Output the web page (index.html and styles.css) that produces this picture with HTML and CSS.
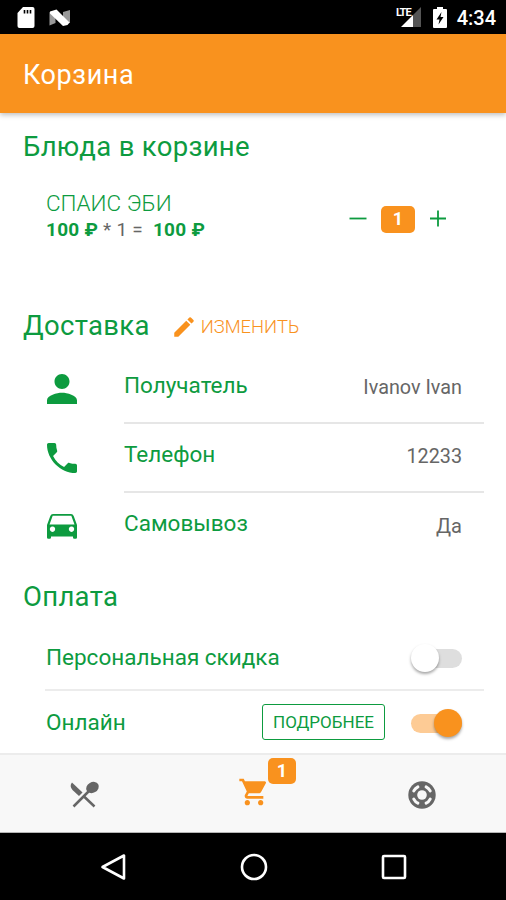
FILE: index.html
```html
<!DOCTYPE html>
<html lang="ru">
<head>
  <meta charset="UTF-8" />
  <title>Корзина</title>
  <link rel="stylesheet" href="styles.css">
</head>
<body>
  <div class="screen">
    <!-- Системная строка -->
    <div class="status-bar">
      <svg class="status-sd" width="18" height="22" viewBox="0 0 18 22">
        <path fill="#fff" d="M6 0h9.500a2 2 0 0 1 2 2v17a2 2 0 0 1-2 2h-13a2 2 0 0 1-2-2V6z" />
        <path stroke="#000" stroke-width="1.600" d="M7.500 3v3.500M10.500 3v3.500M13.500 3v3.500" />
      </svg>
      <svg class="status-n" width="22" height="18" viewBox="0 0 22 18">
        <path fill="#999" d="M0.500 3l6 2v9l-6 2.500zM14 3l7-2v13l-7 1z" />
        <path fill="#fff" d="M1 2.500L7.500 0.500 20.500 13.500l-2 2.500-4.500 1L1 4.500z" />
      </svg>
      <div class="status-right">
        <span class="lte">LTE</span>
        <svg width="22" height="20" viewBox="0 0 22 20">
          <path fill="#555" d="M21 0v20H13V8z" />
          <path fill="#fff" d="M13 8v12H1z" />
        </svg>
        <svg class="status-battery" width="14" height="22" viewBox="0 0 14 22">
          <path fill="#fff" d="M4 0h6v2h3a1 1 0 0 1 1 1v17a1 1 0 0 1-1 1H1a1 1 0 0 1-1-1V3a1 1 0 0 1 1-1h3z" />
          <path fill="#000" d="M8.500 5L3.500 12.500h3L5.500 17.500l5-7.500h-3z" />
        </svg>
        <span class="clock">4:34</span>
      </div>
    </div>

    <header class="toolbar">
      <h1>Корзина</h1>
    </header>

    <main class="content">
      <!-- Блюда -->
      <h2 class="title-dishes">Блюда в корзине</h2>
      <div class="dish">
        <div class="dish-info">
          <div class="dish-name">СПАИС ЭБИ</div>
          <div class="dish-price"><b>100 ₽</b> * 1 = &nbsp;<b>100 ₽</b></div>
        </div>
        <div class="counter">
          <svg width="18" height="18" viewBox="0 0 18 18"><path d="M0.500 8.500h17" /></svg>
          <span class="badge">1</span>
          <svg width="18" height="18" viewBox="0 0 18 18"><path d="M1 8.500h16M9 0.500v16" /></svg>
        </div>
      </div>

      <!-- Доставка -->
      <div class="delivery-head">
        <h2 class="title-delivery">Доставка</h2>
        <a class="edit">
          <svg width="26" height="26" viewBox="0 0 24 24"><path d="M3 17.250V21h3.750L17.810 9.940l-3.750-3.750L3 17.250zM20.710 7.040a1 1 0 0 0 0-1.410l-2.340-2.340a1 1 0 0 0-1.410 0l-1.830 1.830 3.750 3.750 1.830-1.830z" /></svg>
          <span>ИЗМЕНИТЬ</span>
        </a>
      </div>
      <div class="row">
        <svg class="row-icon" viewBox="0 0 512 512"><path d="M256 256c52.805 0 96-43.201 96-96s-43.195-96-96-96-96 43.201-96 96 43.195 96 96 96zm0 48c-63.598 0-192 32.402-192 96v48h384v-48c0-63.598-128.402-96-192-96z" /></svg>
        <div class="row-body">
          <span class="label">Получатель</span>
          <span class="value value-text">Ivanov Ivan</span>
        </div>
      </div>
      <div class="row">
        <svg class="row-icon" viewBox="0 0 512 512"><path d="M426.666 330.667a250.385 250.385 0 0 1-75.729-11.729c-7.469-2.136-16-1.073-21.332 5.333l-46.939 46.928c-60.802-30.928-109.864-80-140.802-140.803l46.939-46.927c5.332-5.333 7.462-13.864 5.332-21.333-8.537-24.531-12.802-50.136-12.802-76.803C181.333 73.604 171.734 64 160 64H85.333C73.599 64 64 73.604 64 85.333 64 274.136 237.864 448 426.666 448 438.400 448 448 438.400 448 426.667V352c0-11.729-9.600-21.333-21.334-21.333z" /></svg>
        <div class="row-body">
          <span class="label">Телефон</span>
          <span class="value value-text">12233</span>
        </div>
      </div>
      <div class="row row-last">
        <svg class="row-icon" viewBox="0 0 40 40"><path fill-rule="evenodd" d="M11 7h18a3 3 0 0 1 2.700 1.900L35 18v12.500a1.300 1.300 0 0 1-1.300 1.300h-1.400A1.300 1.300 0 0 1 31 30.500V29.500H9v1a1.300 1.300 0 0 1-1.300 1.300H6.300A1.300 1.300 0 0 1 5 30.500V18l3.300-9.100A3 3 0 0 1 11 7zM10.700 8.800L7.500 17.500h25L29.300 8.800zM10.500 19.500a2.700 2.700 0 1 0 .01 0zM29.500 19.500a2.700 2.700 0 1 0 .01 0z" /></svg>
        <div class="row-body">
          <span class="label">Самовывоз</span>
          <span class="value">Да</span>
        </div>
      </div>

      <!-- Оплата -->
      <h2 class="title-payment">Оплата</h2>
      <div class="pay-row">
        <span class="label">Персональная скидка</span>
        <span class="toggle"><i></i></span>
      </div>
      <div class="pay-row pay-row-online">
        <span class="label">Онлайн</span>
        <button class="more">ПОДРОБНЕЕ</button>
        <span class="toggle toggle-on"><i></i></span>
      </div>
    </main>

    <!-- Вкладки -->
    <nav class="tabs">
      <a class="tab">
        <svg width="34" height="32" viewBox="0 0 34 32">
          <path d="M5 3.500L15.500 13.500l-3.500 3.500-6.500-6C3.300 8.500 3 5.700 5 3.500z" />
          <ellipse cx="25.500" cy="8.500" rx="6.600" ry="5.300" transform="rotate(-30 25.500 8.500)" />
          <path fill="none" stroke="#666" stroke-width="2.500" d="M22.500 11.500L6.500 27.500M16.500 17l11 10.500" />
        </svg>
      </a>
      <a class="tab tab-active">
        <svg width="32" height="32" viewBox="0 0 24 24"><path d="M7 18c-1.100 0-1.990.9-1.990 2S5.900 22 7 22s2-.9 2-2-.9-2-2-2zM1 2v2h2l3.600 7.590-1.350 2.450c-.16.28-.25.610-.25.960 0 1.100.9 2 2 2h12v-2H7.420c-.14 0-.25-.11-.25-.25l.03-.12.9-1.630h7.450c.75 0 1.410-.41 1.750-1.030l3.580-6.490A1 1 0 0 0 20 4H5.210l-.94-2H1zm16 16c-1.100 0-1.990.9-1.990 2s.89 2 1.990 2 2-.9 2-2-.9-2-2-2z" /></svg>
        <span class="badge tab-badge">1</span>
      </a>
      <a class="tab">
        <svg width="28" height="28" viewBox="0 0 28 28">
          <circle cx="14" cy="14" r="13.700" />
          <circle cx="14" cy="14" r="4.800" fill="#f8f8f8" />
          <path fill="none" stroke="#f8f8f8" stroke-width="3" stroke-linecap="round" d="M5.800 9.900a9.200 9.200 0 0 1 4.100-4.100M18.100 5.800a9.200 9.200 0 0 1 4.100 4.100M22.200 18.100a9.200 9.200 0 0 1-4.100 4.100M9.900 22.200a9.200 9.200 0 0 1-4.100-4.100" />
        </svg>
      </a>
    </nav>

    <!-- Кнопки навигации -->
    <div class="nav-bar">
      <svg width="28" height="28" viewBox="0 0 28 28"><path d="M24 2.500v23L2.500 14z" /></svg>
      <svg width="28" height="28" viewBox="0 0 28 28"><circle cx="14" cy="14" r="12" /></svg>
      <svg width="28" height="28" viewBox="0 0 28 28"><rect x="3" y="3" width="22" height="22" rx="1" /></svg>
    </div>
  </div>
</body>
</html>
```

FILE: styles.css
```css
* {
  box-sizing: border-box;
  margin: 0;
  padding: 0;
}
body {
  font-family: Roboto, "Noto Sans", sans-serif;
  background: #fff;
  color: #666;
}
svg {
  display: block;
  flex: none;
}
.screen {
  width: 506px;
  height: 900px;
  display: flex;
  flex-direction: column;
  overflow: hidden;
}

/* ======= Системная строка ======= */
.status-bar {
  height: 34px;
  flex: none;
  display: flex;
  align-items: flex-start;
  background: #000;
  color: #fff;
  padding: 7px 10px 0 17px;
}
.status-n {
  margin: 2px 0 0 14px;
}
.status-right {
  margin-left: auto;
  display: flex;
}
.lte {
  font-size: 11px;
  font-weight: 700;
  line-height: 11px;
  letter-spacing: -1px;
  margin-right: -11px;
  z-index: 1;
}
.status-battery {
  margin: 0 10px 0 11px;
}
.clock {
  font-size: 20px;
  font-weight: 500;
  line-height: 22px;
}

/* ======= Шапка ======= */
.toolbar {
  height: 79px;
  flex: none;
  padding-left: 23px;
  background: #f9921e;
  box-shadow: 0 2px 5px rgba(0, 0, 0, 0.25);
  z-index: 1;
}
.toolbar h1 {
  color: #fff;
  font-size: 27px;
  font-weight: 400;
  line-height: 82px;
  letter-spacing: 0.6px;
}

/* ======= Содержимое ======= */
.content {
  height: 640px;
  flex: none;
}
h2 {
  color: #0d9b3f;
  font-size: 27.500px;
  font-weight: 400;
  line-height: 36px;
  letter-spacing: 0.3px;
}
.title-dishes {
  padding: 16px 0 0 23px;
}
.dish {
  display: flex;
  justify-content: space-between;
  height: 139px;
  padding: 24px 59px 0 46px;
}
.dish-name {
  color: #0d9b3f;
  font-size: 22.500px;
  font-weight: 300;
  line-height: 28px;
}
.dish-price {
  font-size: 19px;
  line-height: 25px;
  letter-spacing: 0.250px;
}
.dish-price b {
  color: #0d9b3f;
}
.counter {
  display: flex;
  align-items: center;
  height: 30px;
  margin-top: 15px;
  gap: 14px;
}
.counter path {
  stroke: #0d9b3f;
  stroke-width: 1.800;
}
.badge {
  width: 34px;
  height: 27px;
  border-radius: 5px;
  background: #f9921e;
  color: #fff;
  font-size: 18px;
  font-weight: 700;
  line-height: 26px;
  text-align: center;
}

/* ======= Доставка ======= */
.delivery-head {
  display: flex;
  height: 51px;
  padding: 4px 0 0 23px;
}
.edit {
  display: flex;
  align-items: center;
  height: 37px;
  margin-left: 21px;
  color: #f9921e;
  font-size: 18.400px;
  font-weight: 300;
  gap: 4px;
}
.edit svg {
  fill: #f9921e;
}
.row {
  display: flex;
  height: 69px;
  padding: 0 22px 0 42px;
}
.row-icon {
  width: 40px;
  height: 40px;
  margin: 14px 42px 0 0;
  fill: #0d9b3f;
}
.row-body {
  flex: 1;
  display: flex;
  justify-content: space-between;
  padding: 16px 22px 0 0;
  border-bottom: 2px solid #e6e6e6;
}
.row-last .row-body {
  border-bottom: none;
}
.label {
  color: #0d9b3f;
  font-size: 22.500px;
  line-height: 28px;
}
.value {
  font-size: 20px;
  line-height: 34px;
}
.value-text {
  font-size: 19.800px;
}

/* ======= Оплата ======= */
.title-payment {
  height: 55px;
  padding: 17px 0 0 23px;
}
.pay-row {
  display: flex;
  align-items: center;
  height: 74px;
  margin: 0 22px 0 45px;
  padding: 10px 22px 0 1px;
  border-bottom: 2px solid #ececec;
}
.pay-row .label {
  margin-top: -2px;
}
.pay-row-online {
  height: 64px;
  padding-top: 2px;
}
.toggle {
  display: flex;
  align-items: center;
  width: 50px;
  height: 19px;
  margin-left: auto;
  border-radius: 10px;
  background: #dedede;
}
.toggle i {
  width: 28px;
  height: 28px;
  flex: none;
  margin-left: -1px;
  border-radius: 50%;
  background: #fff;
  box-shadow: 0 2px 3px rgba(0, 0, 0, 0.35);
}
.toggle-on {
  justify-content: flex-end;
  width: 51px;
  margin-left: 26px;
  background: #fdcb95;
}
.toggle-on i {
  background: #f9921e;
}
.more {
  width: 123px;
  height: 36px;
  margin: -2px 0 0 auto;
  border: 1px solid #0d9b3f;
  border-radius: 3px;
  background: #fff;
  color: #0d9b3f;
  font-family: inherit;
  font-size: 17px;
}

/* ======= Вкладки ======= */
.tabs {
  height: 80px;
  flex: none;
  display: flex;
  background: #f8f8f8;
  border-top: 2px solid #ececec;
  border-bottom: 1px solid #b5b5b5;
  z-index: 1;
}
.tab {
  position: relative;
  flex: 1;
  display: flex;
  align-items: center;
  justify-content: center;
  padding-top: 3px;
  fill: #666;
}
.tab-active {
  fill: #f9921e;
  padding: 0 0 4px 2px;
}
.tab-badge {
  position: absolute;
  top: 3px;
  left: 100px;
  width: 28px;
  height: 26px;
}

/* ======= Кнопки навигации ======= */
.nav-bar {
  flex: 1;
  display: flex;
  justify-content: center;
  gap: 112px;
  padding: 20px 0 0 2px;
  background: #000;
}
.nav-bar svg {
  fill: none;
  stroke: #fff;
  stroke-width: 2.600;
  stroke-linejoin: round;
}
```
